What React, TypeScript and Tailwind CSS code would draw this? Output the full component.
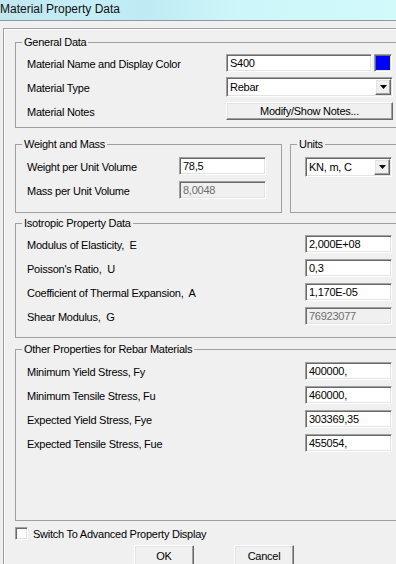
import React from "react";

const sunken =
  "border border-t-[#a0a0a0] border-l-[#a0a0a0] border-b-white border-r-white shadow-[inset_1px_1px_0_#696969,inset_-1px_-1px_0_#e3e3e3]";
const raised =
  "border border-t-white border-l-white border-b-[#696969] border-r-[#696969] shadow-[inset_-1px_-1px_0_#a0a0a0,inset_1px_1px_0_#e3e3e3] bg-[#f0f0f0]";

const TextBox = ({ value, width, disabled }: { value: string; width: string; disabled?: boolean }) => (
  <div
    className={`${sunken} ${width} h-[18px] pl-[3px] leading-[16px] ${
      disabled ? "bg-[#f0f0f0] text-[#6d6d6d]" : "bg-white text-black"
    }`}
  >
    {value}
  </div>
);

const ComboBox = ({ value, width }: { value: string; width: string }) => (
  <div className={`${sunken} ${width} h-[20px] p-[1px] flex bg-white`}>
    <div className="flex-1 pl-[2px] leading-[16px]">{value}</div>
    <div className={`${raised} w-[16px] h-[16px] flex items-center justify-center`}>
      <svg width="7" height="4" viewBox="0 0 7 4">
        <polygon points="0,0 7,0 3.5,4" fill="#000" />
      </svg>
    </div>
  </div>
);

const Group = ({
  title,
  className,
  children,
}: {
  title: string;
  className: string;
  children: React.ReactNode;
}) => (
  <fieldset className={`border border-[#a0a0a0] ${className}`}>
    <legend className="ml-[6px] px-[2px] leading-[14px]">{title}</legend>
    {children}
  </fieldset>
);

const Row = ({ label, labelWidth, children, h = "h-[18px]" }: { label: string; labelWidth: string; children: React.ReactNode; h?: string }) => (
  <div className={`flex items-center ${h}`}>
    <div className={`${labelWidth} pt-[2px]`}>{label}</div>
    {children}
  </div>
);

export default function App() {
  return (
    <div className="w-[396px] h-[564px] overflow-hidden bg-[#f0f0f0] text-[11px] tracking-[-0.25px] text-black font-['Liberation_Sans',Arial,sans-serif]">
      {/* Title bar */}
      <div className="h-[21px] border-b border-[#8d9ba0] bg-[linear-gradient(90deg,#c2e6ef_0%,#c4eef7_25%,#bfe9f3_35%,#cdf6fa_60%,#d2fafb_100%)] text-[12px] tracking-normal leading-[18px] text-[#111]">
        Material Property Data
      </div>

      {/* Frame */}
      <div className="ml-[3px] mt-[7px] w-[420px] h-[560px] border-l border-t border-[#a0a0a0] shadow-[inset_1px_1px_0_white]">
        <div className="pl-[11px] pt-[6px]">
          <Group title="General Data" className="w-[395px]">
            <div className="pl-[11px] pt-[5px] pb-[7px] flex flex-col gap-[5px]">
              <Row label="Material Name and Display Color" labelWidth="w-[199px]">
                <TextBox value="S400" width="w-[146px]" />
                <div className={`${sunken} ml-[2px] w-[18px] h-[18px] p-[1px]`}>
                  <div className="w-full h-full bg-[#0000ff]" />
                </div>
              </Row>
              <Row label="Material Type" labelWidth="w-[199px]" h="h-[20px]">
                <ComboBox value="Rebar" width="w-[167px]" />
              </Row>
              <Row label="Material Notes" labelWidth="w-[199px]">
                <div className={`${raised} w-[167px] h-[18px] text-center leading-[16px]`}>
                  Modify/Show Notes...
                </div>
              </Row>
            </div>
          </Group>

          <div className="mt-[9px] flex gap-[8px]">
            <Group title="Weight and Mass" className="w-[267px]">
              <div className="pl-[11px] pt-[6px] pb-[13px] flex flex-col gap-[6px]">
                <Row label="Weight per Unit Volume" labelWidth="w-[152px]">
                  <TextBox value="78,5" width="w-[87px]" />
                </Row>
                <Row label="Mass per Unit Volume" labelWidth="w-[152px]">
                  <TextBox value="8,0048" width="w-[87px]" disabled />
                </Row>
              </div>
            </Group>
            <Group title="Units" className="w-[120px]">
              <div className="pl-[14px] pt-[6px]">
                <ComboBox value="KN, m, C" width="w-[87px]" />
              </div>
            </Group>
          </div>

          <Group title="Isotropic Property Data" className="mt-[3px] w-[395px]">
            <div className="pl-[11px] pt-[5px] pb-[12px] flex flex-col gap-[6px]">
              <Row label="Modulus of Elasticity,  E" labelWidth="w-[278px] whitespace-pre">
                <TextBox value="2,000E+08" width="w-[87px]" />
              </Row>
              <Row label="Poisson's Ratio,  U" labelWidth="w-[278px] whitespace-pre">
                <TextBox value="0,3" width="w-[87px]" />
              </Row>
              <Row label="Coefficient of Thermal Expansion,  A" labelWidth="w-[278px] whitespace-pre">
                <TextBox value="1,170E-05" width="w-[87px]" />
              </Row>
              <Row label="Shear Modulus,  G" labelWidth="w-[278px] whitespace-pre">
                <TextBox value="76923077" width="w-[87px]" disabled />
              </Row>
            </div>
          </Group>

          <Group title="Other Properties for Rebar Materials" className="mt-[4px] w-[395px]">
            <div className="pl-[11px] pt-[6px] pb-[68px] flex flex-col gap-[6px]">
              <Row label="Minimum Yield Stress, Fy" labelWidth="w-[278px]">
                <TextBox value="400000," width="w-[87px]" />
              </Row>
              <Row label="Minimum Tensile Stress, Fu" labelWidth="w-[278px]">
                <TextBox value="460000," width="w-[87px]" />
              </Row>
              <Row label="Expected Yield Stress, Fye" labelWidth="w-[278px]">
                <TextBox value="303369,35" width="w-[87px]" />
              </Row>
              <Row label="Expected Tensile Stress, Fue" labelWidth="w-[278px]">
                <TextBox value="455054," width="w-[87px]" />
              </Row>
            </div>
          </Group>

          <div className="mt-[6px] flex items-center h-[13px]">
            <div className={`${sunken} w-[13px] h-[13px] bg-white`} />
            <div className="ml-[5px] pt-[1px]">Switch To Advanced Property Display</div>
          </div>

          <div className="mt-[5px] ml-[119px] flex gap-[40px]">
            <div className={`${raised} w-[60px] h-[23px] text-center leading-[21px]`}>OK</div>
            <div className={`${raised} w-[60px] h-[23px] text-center leading-[21px]`}>Cancel</div>
          </div>
        </div>
      </div>
    </div>
  );
}
